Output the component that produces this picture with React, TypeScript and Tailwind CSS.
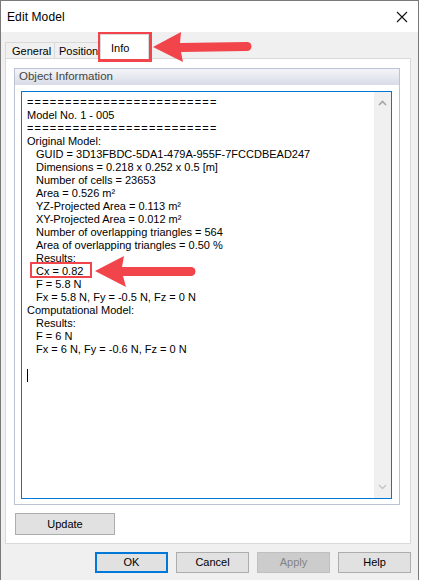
const lines: { text: string; indent?: boolean; eq?: boolean }[] = [
  { text: "=========================", eq: true },
  { text: "Model No. 1 - 005" },
  { text: "=========================", eq: true },
  { text: "Original Model:" },
  { text: "GUID = 3D13FBDC-5DA1-479A-955F-7FCCDBEAD247", indent: true },
  { text: "Dimensions = 0.218 x 0.252 x 0.5 [m]", indent: true },
  { text: "Number of cells = 23653", indent: true },
  { text: "Area = 0.526 m²", indent: true },
  { text: "YZ-Projected Area = 0.113 m²", indent: true },
  { text: "XY-Projected Area = 0.012 m²", indent: true },
  { text: "Number of overlapping triangles = 564", indent: true },
  { text: "Area of overlapping triangles = 0.50 %", indent: true },
  { text: "Results:", indent: true },
  { text: "Cx = 0.82", indent: true },
  { text: "F = 5.8 N", indent: true },
  { text: "Fx = 5.8 N, Fy = -0.5 N, Fz = 0 N", indent: true },
  { text: "Computational Model:" },
  { text: "Results:", indent: true },
  { text: "F = 6 N", indent: true },
  { text: "Fx = 6 N, Fy = -0.6 N, Fz = 0 N", indent: true },
];

const App = () => {
  return (
    <div className="relative h-[580px] w-[421px] bg-white font-['Liberation_Sans',Arial,sans-serif] text-[11px] text-black">
      <div className="flex h-[580px] w-[419px] flex-col border border-b-0 border-[#7a7a7a] bg-[#f0f0f0]">
        {/* title bar */}
        <div className="flex h-[31px] items-center justify-between bg-white pl-[6px] pr-[10px]">
          <span className="text-[12px] tracking-[0.1px]">Edit Model</span>
          <svg width="12" height="12" viewBox="0 0 12 12">
            <path d="M1 1 L11 11 M11 1 L1 11" stroke="#111" strokeWidth="1.1" />
          </svg>
        </div>

        {/* tabs */}
        <div className="mt-[2px] flex h-[25px] items-end pl-[4px]">
          <div className="flex h-[17px] w-[50px] items-center border border-b-0 border-[#d9d9d9] pl-[6px]">
            General
          </div>
          <div className="flex h-[17px] w-[45px] items-center border border-b-0 border-l-0 border-[#d9d9d9] pl-[4px]">
            Position
          </div>
          <div className="relative z-10 flex h-[25px] w-[49px] items-start border border-b-0 border-[#d9d9d9] bg-white pl-[10px] pt-[5px]">
            Info
          </div>
        </div>

        {/* tab panel */}
        <div className="-mt-px ml-[4px] flex h-[486px] w-[406px] flex-col border border-[#d9d9d9] bg-white pl-[8px] pt-[9px]">
          <div className="flex h-[437px] w-[386px] flex-col border border-[#bcc3d4] pb-[5px]">
            <div className="flex h-[16px] items-center bg-gradient-to-b from-[#f4f5f8] to-[#d8dce7] pl-[4px] text-[11.5px] text-[#444]">
              Object Information
            </div>
            <div className="ml-[6px] mt-[6px] flex h-[408px] w-[371px] border border-[#0078d7] bg-white">
              <div className="flex-1 pl-[5px] pt-[4px] leading-[13px]">
                {lines.map((l, i) => (
                  <div
                    key={i}
                    className={`h-[13px] whitespace-nowrap ${l.indent ? "pl-[9px]" : ""} ${l.eq ? "tracking-[1.2px]" : ""}`}
                  >
                    {l.text}
                  </div>
                ))}
                <div className="h-[13px]" />
                <div className="h-[13px] w-px bg-black" />
              </div>
              <div className="flex w-[17px] flex-col items-center justify-between bg-[#f0f0f0] py-[8px]">
                <svg width="9" height="6" viewBox="0 0 9 6">
                  <path d="M1 5 L4.5 1.5 L8 5" stroke="#a6a6a6" strokeWidth="1.6" fill="none" />
                </svg>
                <svg width="9" height="6" viewBox="0 0 9 6">
                  <path d="M1 1 L4.5 4.5 L8 1" stroke="#c4c4c4" strokeWidth="1.3" fill="none" />
                </svg>
              </div>
            </div>
          </div>
          <button className="ml-[1px] mt-[8px] h-[22px] w-[100px] border border-[#adadad] bg-[#e1e1e1] text-[11px]">
            Update
          </button>
        </div>

        {/* dialog buttons */}
        <div className="mt-[8px] flex justify-end gap-[8px] pr-[7px]">
          <button className="h-[21px] w-[73px] border-2 border-[#0078d7] bg-[#e1e1e1] text-[11px]">
            OK
          </button>
          <button className="h-[21px] w-[73px] border border-[#adadad] bg-[#e1e1e1] text-[11px]">
            Cancel
          </button>
          <button className="h-[21px] w-[73px] border border-[#bfbfbf] bg-[#cccccc] text-[11px] text-[#838383]">
            Apply
          </button>
          <button className="h-[21px] w-[73px] border border-[#adadad] bg-[#e1e1e1] text-[11px]">
            Help
          </button>
        </div>
      </div>

      {/* annotations */}
      <svg className="pointer-events-none absolute left-0 top-0" width="421" height="580">
        <rect x="99.5" y="33.5" width="51" height="27" fill="none" stroke="#f1454b" strokeWidth="3" />
        <polygon points="153,47 181,32 180,43 247,42 247,51 181,52 183,62" fill="#f1454b" />
        <circle cx="247" cy="46.5" r="4.5" fill="#f1454b" />
        <rect x="31" y="263" width="60" height="14" fill="none" stroke="#f1454b" strokeWidth="2" />
        <polygon points="95,271 124,256 122,267 191,267 191,276 123,276 126,287" fill="#f1454b" />
        <circle cx="191" cy="271.5" r="4.5" fill="#f1454b" />
      </svg>
    </div>
  );
};

export default App;
